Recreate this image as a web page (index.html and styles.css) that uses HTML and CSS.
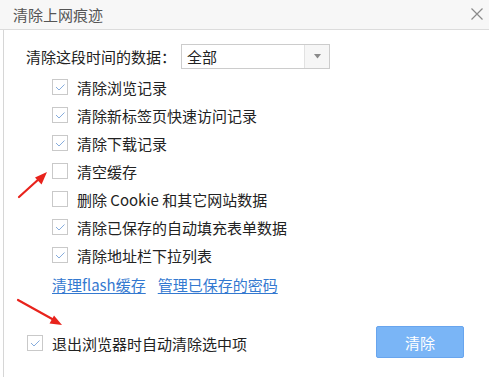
FILE: index.html
```html
<!DOCTYPE html>
<html lang="zh-CN">
<head>
<meta charset="utf-8">
<title>清除上网痕迹</title>
<link rel="stylesheet" href="styles.css">
</head>
<body>
<div class="dialog">
  <div class="titlebar">
    <span class="title">清除上网痕迹</span>
    <span class="close" aria-label="关闭">
      <svg width="12" height="12" viewBox="0 0 12 12"><path d="M0.5 0.5 L11.5 11.5 M11.5 0.5 L0.5 11.5" stroke="#8a8a8a" stroke-width="1.2" fill="none"/></svg>
    </span>
  </div>
  <div class="content">
    <div class="range-row">
      <span class="range-label">清除这段时间的数据：</span>
      <div class="select">
        <span class="select-value">全部</span>
        <span class="select-btn"><svg width="7" height="5" viewBox="0 0 7 5"><path d="M0 0 L7 0 L3.5 4.5 Z" fill="#8a8a8a"/></svg></span>
      </div>
    </div>
    <ul class="options">
      <li class="opt"><span class="cb"><svg class="tick" width="14" height="14" viewBox="0 0 14 14"><path d="M3 7 L6 10 L11.5 4.5"/></svg></span><span>清除浏览记录</span></li>
      <li class="opt"><span class="cb"><svg class="tick" width="14" height="14" viewBox="0 0 14 14"><path d="M3 7 L6 10 L11.5 4.5"/></svg></span><span>清除新标签页快速访问记录</span></li>
      <li class="opt"><span class="cb"><svg class="tick" width="14" height="14" viewBox="0 0 14 14"><path d="M3 7 L6 10 L11.5 4.5"/></svg></span><span>清除下载记录</span></li>
      <li class="opt"><span class="cb"></span><span>清空缓存</span></li>
      <li class="opt"><span class="cb"></span><span>删除 Cookie 和其它网站数据</span></li>
      <li class="opt"><span class="cb"><svg class="tick" width="14" height="14" viewBox="0 0 14 14"><path d="M3 7 L6 10 L11.5 4.5"/></svg></span><span>清除已保存的自动填充表单数据</span></li>
      <li class="opt"><span class="cb"><svg class="tick" width="14" height="14" viewBox="0 0 14 14"><path d="M3 7 L6 10 L11.5 4.5"/></svg></span><span>清除地址栏下拉列表</span></li>
    </ul>
    <div class="links">
      <a class="link" href="#">清理flash缓存</a>
      <a class="link" href="#">管理已保存的密码</a>
    </div>
    <div class="footer">
      <label class="auto"><span class="cb"><svg class="tick" width="14" height="14" viewBox="0 0 14 14"><path d="M3 7 L6 10 L11.5 4.5"/></svg></span><span>退出浏览器时自动清除选中项</span></label>
      <button class="btn">清除</button>
    </div>
  </div>
  <svg class="arrows" width="489" height="377" viewBox="0 0 489 377">
    <line x1="19" y1="197" x2="40" y2="178" stroke="#e8231c" stroke-width="2.2" stroke-linecap="round"/>
    <polygon points="47,172 35,177.5 41.5,184.5" fill="#e8231c"/>
    <line x1="18" y1="300" x2="54" y2="320" stroke="#e8231c" stroke-width="2.2" stroke-linecap="round"/>
    <polygon points="62,325 49.5,323.5 54,315.5" fill="#e8231c"/>
  </svg>
</div>
</body>
</html>
```

FILE: styles.css
```css
* { box-sizing: border-box; }
html, body { margin: 0; padding: 0; background: #ffffff; }
body {
  font-family: "Noto Sans CJK SC", "Noto Sans", sans-serif;
  font-size: 15px;
  color: #222;
}
.dialog {
  position: relative;
  width: 489px;
  height: 377px;
  overflow: hidden;
  background: #fff;
}
.titlebar {
  height: 30px;
  background: #f7f7f7;
  border-bottom: 1px solid #dcdcdc;
  display: flex;
  align-items: center;
  justify-content: space-between;
  padding: 0 6px 0 13px;
}
.title {
  color: #555;
  font-size: 15px;
  line-height: 29px;
  margin-top: -1px;
}
.close {
  display: flex;
  width: 12px;
  height: 12px;
  margin-top: -1px;
}
.content {
  margin-left: 3px;
  border-left: 1px solid #d6d6d6;
  height: 347px;
  padding: 14px 25px 0 22px;
}
.range-row {
  display: flex;
  align-items: center;
  height: 25px;
  margin-bottom: 4px;
}
.range-label {
  width: 155px;
  line-height: 25px;
}
.select {
  display: flex;
  width: 149px;
  height: 25px;
  border: 1px solid #cccccc;
  background: #fff;
}
.select-value {
  flex: 1;
  padding-left: 5px;
  line-height: 23px;
}
.select-btn {
  width: 25px;
  border-left: 1px solid #e2e2e2;
  background: #f6f6f6;
  display: flex;
  align-items: center;
  justify-content: center;
}
.options {
  list-style: none;
  margin: 0;
  padding: 0 0 0 26px;
}
.opt {
  display: flex;
  align-items: center;
  height: 28px;
}
.cb {
  width: 16px;
  height: 16px;
  border: 1px solid #c9c9c9;
  background: #fff;
  margin-right: 9px;
  flex: none;
  display: flex;
}
.tick {
  display: block;
}
.tick path {
  fill: none;
  stroke: #86acdc;
  stroke-width: 1;
}
.links {
  display: flex;
  gap: 12px;
  height: 30px;
  align-items: center;
  padding-left: 26px;
}
.link {
  color: #3479d0;
  text-decoration: underline;
  text-underline-offset: 2px;
}
.footer {
  display: flex;
  align-items: center;
  justify-content: space-between;
  margin-top: 27px;
  height: 32px;
  padding-left: 1px;
}
.auto {
  display: flex;
  align-items: center;
  margin-top: 2px;
}
.btn {
  width: 88px;
  height: 32px;
  background: #7ab5f6;
  border: 1px solid #68a5ee;
  border-radius: 2px;
  color: #fff;
  font-family: "Noto Sans CJK SC", "Noto Sans", sans-serif;
  font-size: 15px;
  padding: 0;
}
.arrows {
  position: absolute;
  left: 0;
  top: 0;
  pointer-events: none;
}
```
